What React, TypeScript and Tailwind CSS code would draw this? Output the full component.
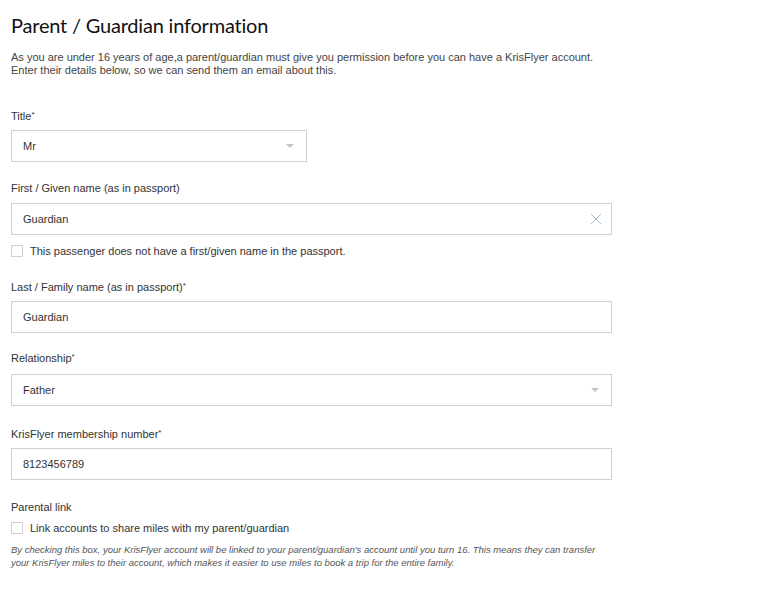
import React from 'react';

const body = { fontFamily: '"Liberation Sans", Arial, sans-serif' };

function Label({ text, req, className }: { text: string; req?: boolean; className: string }) {
  return (
    <div className={`h-[14px] text-[11px] leading-[14px] text-[#333] ${className}`}>
      {text}
      {req && <span className="relative -top-[3px] text-[8px]">*</span>}
    </div>
  );
}

function Field({ value, w, select, clear, className }: { value: string; w: string; select?: boolean; clear?: boolean; className: string }) {
  return (
    <div className={`flex h-[32px] items-center justify-between border border-[#cfcfcf] bg-white pl-[11px] pr-[10px] ${w} ${className}`}>
      <span className="text-[11px] text-[#333]">{value}</span>
      {select && (
        <svg width="8" height="4" viewBox="0 0 8 4" className="mr-[2px]">
          <path d="M0 0h8L4 4z" fill="#c4c4c4" />
        </svg>
      )}
      {clear && (
        <svg width="12" height="12" viewBox="0 0 12 12" className="-mr-[1px]">
          <path d="M1 1l10 10M11 1L1 11" stroke="#a9bcd2" strokeWidth="1" />
        </svg>
      )}
    </div>
  );
}

function Check({ text, className }: { text: string; className: string }) {
  return (
    <div className={`flex h-[14px] items-center ${className}`}>
      <span className="h-[12px] w-[12px] border border-[#cfcfcf] bg-white" />
      <span className="ml-[7px] text-[11px] leading-[14px] text-[#333]">{text}</span>
    </div>
  );
}

export default function App() {
  return (
    <div className="min-h-[614px] w-[768px] bg-white pl-[11px] pt-[12px]" style={body}>
      <h1
        className="h-[26px] text-[20px] leading-[26px] tracking-[-0.2px] text-[#111]"
        style={{ fontFamily: 'Lato, "Liberation Sans", sans-serif' }}
      >
        Parent / Guardian information
      </h1>
      <p className="mt-[13px] text-[11px] leading-[13px] text-[#444]">
        As you are under 16 years of age,a parent/guardian must give you permission before you can have a KrisFlyer account.
        <br />
        Enter their details below, so we can send them an email about this.
      </p>

      <Label text="Title" req className="mt-[32px]" />
      <Field value="Mr" w="w-[296px]" select className="mt-[7px]" />

      <Label text="First / Given name (as in passport)" className="mt-[19px]" />
      <Field value="Guardian" w="w-[601px]" clear className="mt-[8px]" />
      <Check text="This passenger does not have a first/given name in the passport." className="mt-[9px]" />

      <Label text="Last / Family name (as in passport)" req className="mt-[22px]" />
      <Field value="Guardian" w="w-[601px]" className="mt-[7px]" />

      <Label text="Relationship" req className="mt-[18px]" />
      <Field value="Father" w="w-[601px]" select className="mt-[9px]" />

      <Label text="KrisFlyer membership number" req className="mt-[21px]" />
      <Field value="8123456789" w="w-[601px]" className="mt-[7px]" />

      <Label text="Parental link" className="mt-[20px]" />
      <Check text="Link accounts to share miles with my parent/guardian" className="mt-[7px]" />
      <p className="mt-[8px] text-[9.5px] italic leading-[13px] text-[#555]">
        By checking this box, your KrisFlyer account will be linked to your parent/guardian's account until you turn 16. This means they can transfer
        <br />
        your KrisFlyer miles to their account, which makes it easier to use miles to book a trip for the entire family.
      </p>
    </div>
  );
}
